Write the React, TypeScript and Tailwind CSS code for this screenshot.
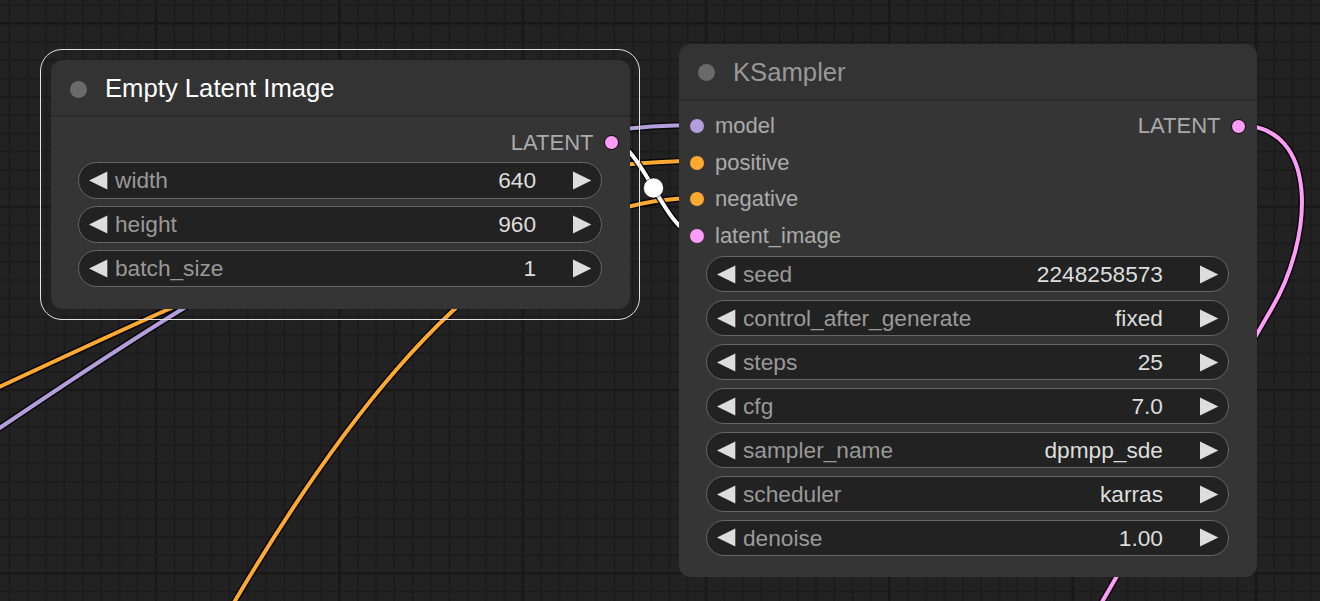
type Slot = { name: string; color: string }
type Widget = { label: string; value: string }

const emptyLatentWidgets: Widget[] = [
  { label: 'width', value: '640' },
  { label: 'height', value: '960' },
  { label: 'batch_size', value: '1' },
]

const ksamplerInputs: Slot[] = [
  { name: 'model', color: '#b39ddb' },
  { name: 'positive', color: '#ffa931' },
  { name: 'negative', color: '#ffa931' },
  { name: 'latent_image', color: '#ff9cf9' },
]

const ksamplerWidgets: Widget[] = [
  { label: 'seed', value: '2248258573' },
  { label: 'control_after_generate', value: 'fixed' },
  { label: 'steps', value: '25' },
  { label: 'cfg', value: '7.0' },
  { label: 'sampler_name', value: 'dpmpp_sde' },
  { label: 'scheduler', value: 'karras' },
  { label: 'denoise', value: '1.00' },
]

// wires: [path, colour]
const links: Array<[string, string]> = [
  ['M -150 530 C 250 255, 450 125, 697 125', '#b39ddb'],
  ['M -200 480 C 200 295, 450 161, 697 161', '#ffa931'],
  ['M 115 820 C 305 450, 480 198, 697 198', '#ffa931'],
  ['M 1238 125 C 1322 125, 1312 240, 1272 308 L 1080 640', '#ff9cf9'],
  ['M 610 141 C 642 141, 665 235, 697 235', '#ffffff'],
]

function Arrow({ dir }: { dir: 'left' | 'right' }) {
  return (
    <svg width="19" height="19" viewBox="0 0 19 19" className="block shrink-0">
      <path d={dir === 'left' ? 'M18.3 0.4 L0 9.5 L18.3 18.6 Z' : 'M0 0.4 L18.3 9.5 L0 18.6 Z'} fill="#dddddd" />
    </svg>
  )
}

function WidgetRow({ w }: { w: Widget }) {
  return (
    <div className="mx-[27.5px] flex h-[36.67px] items-center rounded-full border border-[#666] bg-[#222] pl-[10px] pr-[9px] text-[22.7px] leading-none">
      <Arrow dir="left" />
      <span className="ml-[7px] text-[#999]">{w.label}</span>
      <span className="ml-auto text-[#ddd]">{w.value}</span>
      <span className="ml-[37px]"><Arrow dir="right" /></span>
    </div>
  )
}

function InputSlot({ slot }: { slot: Slot }) {
  return (
    <div className="flex items-center pl-[11.5px]">
      <span className="h-[14px] w-[14px] rounded-full" style={{ backgroundColor: slot.color }} />
      <span className="ml-[11px] text-[#aaa]">{slot.name}</span>
    </div>
  )
}

function OutputSlot({ name }: { name: string }) {
  return (
    <div className="ml-auto flex items-center pr-[10.5px]">
      <span className="text-[#aaa]">{name}</span>
      <span className="ml-[10.5px] h-[15px] w-[15px] rounded-full border-[1.5px] border-black bg-[#ff9cf9]" />
    </div>
  )
}

function NodeTitle({ title, selected }: { title: string; selected?: boolean }) {
  return (
    <div className="flex h-[57px] items-center border-b-2 border-[#2c2c2c] bg-[#333] pl-[19px] pt-[3px]">
      <span className="h-[17px] w-[17px] rounded-full bg-[#6a6a6a]" />
      <span className={`ml-[18.5px] text-[25.67px] leading-none ${selected ? 'text-white' : 'text-[#999]'}`}>{title}</span>
    </div>
  )
}

function Grid() {
  return (
    <>
      <defs>
        <pattern id="minor" patternUnits="userSpaceOnUse" x="8.6" y="4.3" width="18.333" height="18.333">
          <rect x="0" y="0" width="1.5" height="18.333" fill="#1b1b1b" />
          <rect x="0" y="0" width="18.333" height="1.5" fill="#1b1b1b" />
        </pattern>
        <pattern id="major" patternUnits="userSpaceOnUse" x="154.8" y="22.1" width="183.333" height="183.333">
          <rect x="0" y="0" width="2.5" height="183.333" fill="#181818" />
          <rect x="0" y="0" width="183.333" height="2.5" fill="#181818" />
        </pattern>
      </defs>
      <rect width="1320" height="601" fill="#222222" />
      <rect width="1320" height="601" fill="url(#minor)" />
      <rect width="1320" height="601" fill="url(#major)" />
    </>
  )
}

export default function App() {
  return (
    <div className="relative h-[601px] w-[1320px] overflow-hidden bg-[#222] font-['Liberation_Sans',Arial,sans-serif]">
      <svg className="absolute inset-0" width="1320" height="601" viewBox="0 0 1320 601">
        <Grid />
        {links.map(([d, color]) => (
          <g key={d} fill="none" strokeLinecap="round">
            <path d={d} stroke="#000" strokeOpacity="0.75" strokeWidth="7" />
            <path d={d} stroke={color} strokeWidth="4" />
          </g>
        ))}
        <circle cx="653.5" cy="188" r="10" fill="#fff" stroke="#000" strokeOpacity="0.5" strokeWidth="1" />
      </svg>

      {/* selection outline */}
      <div className="absolute left-[39.5px] top-[48.5px] h-[271px] w-[600.5px] rounded-[22px] border-[1.5px] border-[#e2e2e2]" />

      {/* Empty Latent Image */}
      <div className="absolute left-[50.5px] top-[60px] h-[249px] w-[579px] overflow-hidden rounded-[12px] bg-[#353535]">
        <NodeTitle title="Empty Latent Image" selected />
        <div className="pt-[7.33px] text-[22px] leading-none">
          <div className="flex h-[36.67px] items-center">
            <OutputSlot name="LATENT" />
          </div>
        </div>
        <div className="mt-[1.3px] flex flex-col gap-[7.33px]">
          {emptyLatentWidgets.map((w) => <WidgetRow key={w.label} w={w} />)}
        </div>
      </div>

      {/* KSampler */}
      <div className="absolute left-[678.5px] top-[43.5px] h-[533.5px] w-[578px] overflow-hidden rounded-[12px] bg-[#353535]">
        <NodeTitle title="KSampler" />
        <div className="pt-[7.33px] text-[22px] leading-none">
          {ksamplerInputs.map((slot, i) => (
            <div key={slot.name} className="flex h-[36.67px] items-center">
              <InputSlot slot={slot} />
              {i === 0 && <OutputSlot name="LATENT" />}
            </div>
          ))}
        </div>
        <div className="mt-[1.3px] flex flex-col gap-[7.33px]">
          {ksamplerWidgets.map((w) => <WidgetRow key={w.label} w={w} />)}
        </div>
      </div>
    </div>
  )
}
